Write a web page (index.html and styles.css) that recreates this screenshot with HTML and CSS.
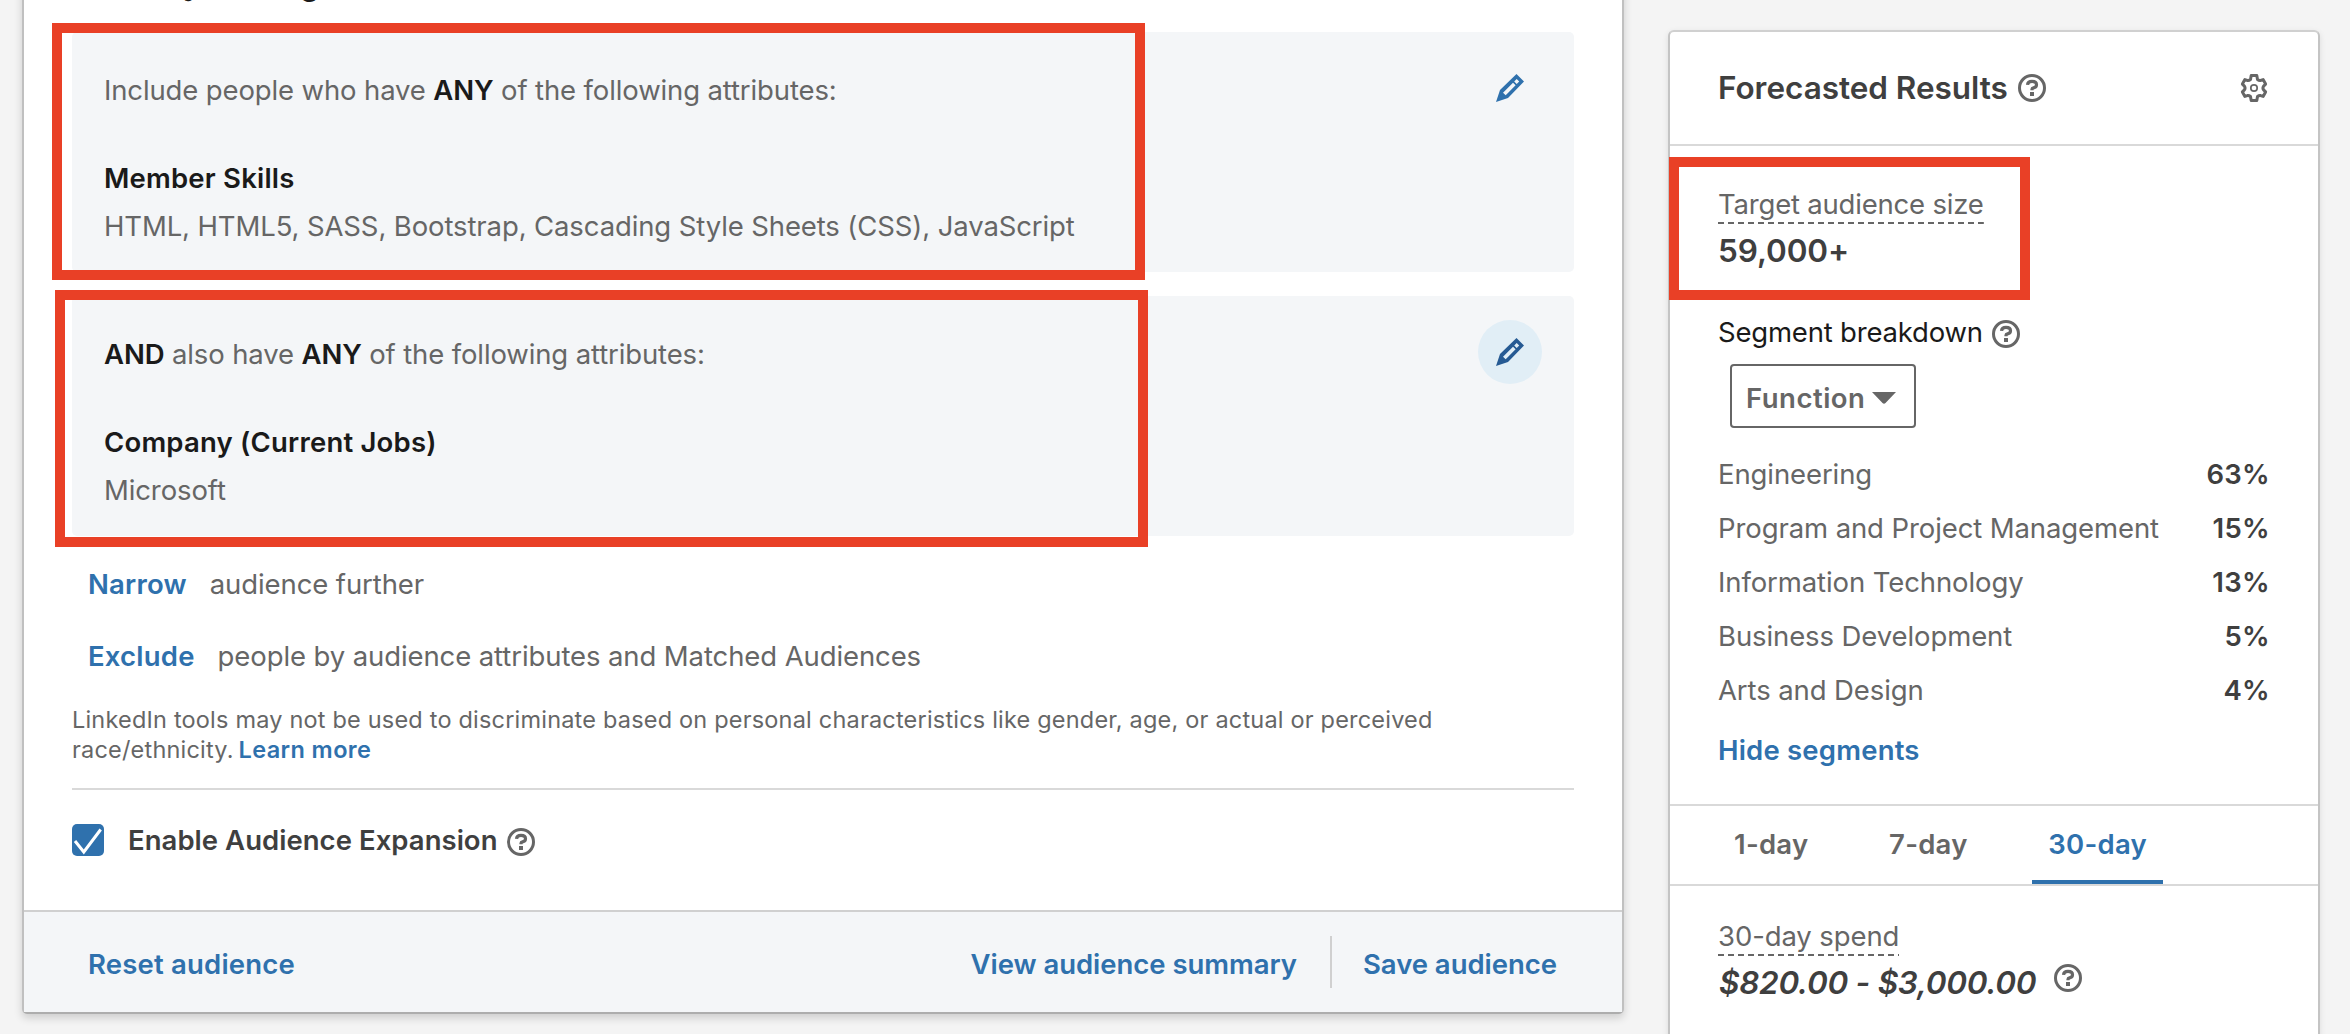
FILE: index.html
```html
<!DOCTYPE html>
<html lang="en">
<head>
<meta charset="utf-8">
<title>Audience</title>
<link rel="stylesheet" href="styles.css">
</head>
<body>
<svg class="defs" width="0" height="0">
  <symbol id="help" viewBox="0 0 28 28">
    <circle cx="14" cy="14" r="12.5" fill="none" stroke="currentColor" stroke-width="3"/>
    <path d="M9.5 10.9C9.7 8.6 11.3 7.4 14 7.4s4.5 1.3 4.5 3.4c0 1.8-1.3 2.8-3 3.1-1 .2-1.5.6-1.5 1.4v.9" fill="none" stroke="currentColor" stroke-width="3.2"/>
    <rect x="12" y="18" width="4" height="4" fill="currentColor"/>
  </symbol>
  <symbol id="gear" viewBox="0 0 28 28">
    <path d="M11.2 1.5h5.6l.7 4c.9.7 2 1.1 3.1.9l2.5-.8 2.5 4.5-2 2c-.7 1-.7 2.8 0 3.8l2 2-2.5 4.5-2.5-.8c-1.1-.2-2.2.2-3.1.9l-.7 4h-5.6l-.7-4c-.9-.7-2-1.1-3.1-.9l-2.5.8-2.5-4.5 2-2c.7-1 .7-2.8 0-3.8l-2-2 2.5-4.5 2.5.8c1.1.2 2.2-.2 3.1-.9z" fill="none" stroke="currentColor" stroke-width="3" stroke-linejoin="round"/>
    <circle cx="14" cy="14" r="3.2" fill="none" stroke="currentColor" stroke-width="1.7"/>
  </symbol>
  <symbol id="pencil" viewBox="0 0 28 28">
    <path fill="currentColor" fill-rule="evenodd" d="M0 28 4 16 20.5 0 28 7.5 12 24zM7 18.7 9.7 21.3 19.6 11.3 17 8.7zM18.2 7.4 20.7 9.9 23.2 7.4 20.7 4.9z"/>
  </symbol>
</svg>
<main class="page">
  <section class="panel">
    <div class="panel-body">
      <h2 class="heading">Who is your target audience?</h2>
      <div class="criteria">
        <div class="criteria-text">
          <p class="rule">Include people who have <b>ANY</b> of the following attributes:</p>
          <h3 class="facet">Member Skills</h3>
          <p class="values">HTML, HTML5, SASS, Bootstrap, Cascading Style Sheets (CSS), JavaScript</p>
        </div>
        <button class="edit"><svg class="icon"><use href="#pencil"/></svg></button>
      </div>
      <div class="criteria">
        <div class="criteria-text">
          <p class="rule"><b>AND</b> also have <b>ANY</b> of the following attributes:</p>
          <h3 class="facet">Company (Current Jobs)</h3>
          <p class="values">Microsoft</p>
        </div>
        <button class="edit edit-hover"><svg class="icon"><use href="#pencil"/></svg></button>
      </div>
      <div class="actions">
        <div class="action"><a class="link">Narrow</a><span>audience further</span></div>
        <div class="action"><a class="link">Exclude</a><span>people by audience attributes and Matched Audiences</span></div>
      </div>
      <p class="notice">LinkedIn tools may not be used to discriminate based on personal characteristics like gender, age, or actual or perceived<br>race/ethnicity. <a class="link">Learn more</a></p>
      <div class="expansion">
        <span class="checkbox"><svg width="32" height="32" viewBox="0 0 32 32"><path d="M3 17l8.8 11L28.7 5.5" fill="none" stroke="#fff" stroke-width="3"/></svg></span>
        <span class="expansion-label">Enable Audience Expansion</span>
        <svg class="icon expansion-help"><use href="#help"/></svg>
      </div>
    </div>
    <footer class="footer">
      <a class="link reset">Reset audience</a>
      <a class="link tight">View audience summary</a>
      <span class="separator"></span>
      <a class="link tight">Save audience</a>
    </footer>
  </section>

  <aside class="forecast">
    <header class="forecast-head">
      <h2 class="forecast-title">Forecasted Results</h2>
      <svg class="icon"><use href="#help"/></svg>
      <svg class="icon gear"><use href="#gear"/></svg>
    </header>
    <div class="forecast-body">
      <span class="term term-size">Target audience size</span>
      <div class="figure">59,000+</div>
      <div class="segment"><span>Segment breakdown</span><svg class="icon"><use href="#help"/></svg></div>
      <button class="select"><span>Function</span><svg width="24" height="12" viewBox="0 0 24 12"><path d="M0 0h24L13.5 11q-1.5 1.6-3 0z" fill="currentColor"/></svg></button>
      <dl class="rows">
        <div class="row"><dt>Engineering</dt><dd>63%</dd></div>
        <div class="row"><dt>Program and Project Management</dt><dd>15%</dd></div>
        <div class="row"><dt>Information Technology</dt><dd>13%</dd></div>
        <div class="row"><dt>Business Development</dt><dd>5%</dd></div>
        <div class="row"><dt>Arts and Design</dt><dd>4%</dd></div>
      </dl>
      <a class="link hide">Hide segments</a>
    </div>
    <nav class="tabs">
      <a class="tab">1-day</a>
      <a class="tab">7-day</a>
      <a class="tab tab-active">30-day</a>
    </nav>
    <div class="spend">
      <span class="term">30-day spend</span>
      <div class="spend-row"><em class="spend-value">$820.00 - $3,000.00</em><svg class="icon"><use href="#help"/></svg></div>
    </div>
  </aside>

  <div class="callout callout-skills"></div>
  <div class="callout callout-company"></div>
  <div class="callout callout-size"></div>
</main>
</body>
</html>
```
FILE: styles.css
```css
* { box-sizing: border-box; margin: 0; padding: 0; }

body {
  background: #f4f4f4;
  color: #666;
  font: 400 27.5px/40px Inter, "Liberation Sans", sans-serif;
  letter-spacing: -0.1px;
}

button { font: inherit; letter-spacing: inherit; color: inherit; background: none; border: 0; }
.defs { position: absolute; }
.icon { display: block; flex: none; width: 28px; height: 28px; }
.link { color: #2f71ad; font-weight: 600; letter-spacing: 0.2px; }
.tight { letter-spacing: -0.03px; }

.page {
  position: relative;
  display: flex;
  justify-content: space-between;
  align-items: flex-start;
  height: 1034px;
  padding: 0 30px 0 22px;
  overflow: hidden;
}

/* Audience panel */
.panel {
  width: 1602px;
  margin-top: -36px;
  background: #fff;
  border: 2px solid #c0c0c0;
  border-top: 0;
  border-bottom-color: #adadad;
  border-radius: 0 0 5px 5px;
  box-shadow: 0 4px 8px rgba(0, 0, 0, 0.16);
}
.panel-body { padding: 0 48px 50px; }
.heading { margin-bottom: 28px; color: #1a1a1a; font-size: 31.5px; font-weight: 600; line-height: 40px; letter-spacing: -0.15px; }

.criteria {
  display: flex;
  justify-content: space-between;
  align-items: flex-start;
  height: 240px;
  padding: 24px 32px 0 32px;
  background: #f4f6f8;
  border-radius: 5px;
}
.criteria + .criteria { margin-top: 24px; }
.criteria-text { padding-top: 14px; }
.rule { letter-spacing: -0.13px; }
.values { letter-spacing: -0.115px; }
.rule b, .facet { color: #1a1a1a; font-weight: 600; }
.facet { margin: 48px 0 8px; font-size: 27.5px; letter-spacing: 0.2px; }
.edit { display: grid; place-items: center; width: 64px; height: 64px; border-radius: 50%; color: #2f71ad; }
.edit-hover { background: #e1eef6; color: #265a93; }

.actions { display: grid; gap: 32px; padding: 28px 0 29px 16px; }
.action { display: flex; gap: 23px; }
.notice { padding-bottom: 23px; border-bottom: 2px solid #d9d9d9; font-size: 23.5px; line-height: 30px; letter-spacing: 0.195px; }
.notice .link { margin-left: -2px; letter-spacing: 0.4px; }

.expansion { display: flex; align-items: center; margin-top: 30px; color: #3f3f3f; }
.checkbox { width: 32px; height: 32px; margin-right: 24px; border-radius: 5px; background: #2f71ad; }
.checkbox svg { display: block; }
.expansion-label { font-weight: 600; letter-spacing: 0.04px; }
.expansion-help { margin: 4px 0 0 9px; color: #666; }

.footer {
  display: flex;
  align-items: center;
  height: 102px;
  padding: 0 65px 0 64px;
  background: #f4f6f8;
  border-top: 2px solid #d0d0d0;
}
.footer .link { padding-top: 4px; }
.reset { margin-right: auto; }
.separator { width: 2px; height: 52px; margin: 0 31px 0 33px; background: #d0d0d0; }

/* Forecast card */
.forecast {
  width: 652px;
  height: 1100px;
  margin-top: 30px;
  background: #fff;
  border: 2px solid #c4c4c4;
  border-top-color: #d0d0d0;
  border-radius: 6px;
  box-shadow: 0 2px 6px rgba(0, 0, 0, 0.1);
}
.forecast-head { display: flex; align-items: center; gap: 10px; height: 114px; padding: 0 50px 0 48px; border-bottom: 2px solid #d9d9d9; }
.forecast-title { color: #3f3f3f; font-size: 31.5px; font-weight: 600; letter-spacing: -0.03px; }
.gear { margin-left: auto; }
.forecast-body { padding: 40px 48px 34px; }
.term {
  display: block;
  width: fit-content;
  padding-bottom: 2px;
  line-height: 36px;
  background: repeating-linear-gradient(90deg, #666 0 6px, transparent 6px 10px) bottom / 100% 2px no-repeat;
}
.term-size { letter-spacing: -0.2px; }
.figure { margin-top: 7px; color: #3f3f3f; font-size: 31.5px; font-weight: 600; }
.segment { display: flex; align-items: center; gap: 9px; margin-top: 41px; color: #1a1a1a; letter-spacing: -0.2px; }
.segment .icon { margin-top: 4px; color: #666; }
.select {
  display: flex;
  align-items: center;
  gap: 7px;
  width: 186px;
  height: 64px;
  margin: 12px 0 26px 12px;
  padding: 4px 0 0 14px;
  border: 2px solid #666;
  border-radius: 4px;
  font-weight: 600;
  letter-spacing: 0.5px;
}
.rows { display: grid; gap: 14px; }
.row { display: flex; justify-content: space-between; }
.row dd { color: #3f3f3f; font-weight: 600; letter-spacing: 0.3px; }
.hide { display: block; margin-top: 20px; }

.tabs { display: flex; gap: 48.7px; height: 82px; padding: 0 48px; border-top: 2px solid #d9d9d9; border-bottom: 2px solid #d9d9d9; }
.tab { padding: 18px 16px 0; font-weight: 600; letter-spacing: 0.25px; }
.tab-active { color: #2f71ad; border-bottom: 4px solid #2f71ad; }

.spend { padding: 32px 48px; }
.spend-row { display: flex; align-items: flex-start; gap: 18px; margin-top: 7px; padding-left: 1px; }
.spend-row .icon { margin-top: 1px; }
.spend-value { color: #3f3f3f; font-size: 31.5px; font-weight: 600; letter-spacing: -0.27px; }

/* Annotation frames drawn over the page */
.callout { position: absolute; border: 10px solid #e94026; }
.callout-skills { left: 52px; top: 23px; width: 1093px; height: 257px; }
.callout-company { left: 55px; top: 290px; width: 1093px; height: 257px; }
.callout-size { left: 1669px; top: 157px; width: 361px; height: 143px; }
```
